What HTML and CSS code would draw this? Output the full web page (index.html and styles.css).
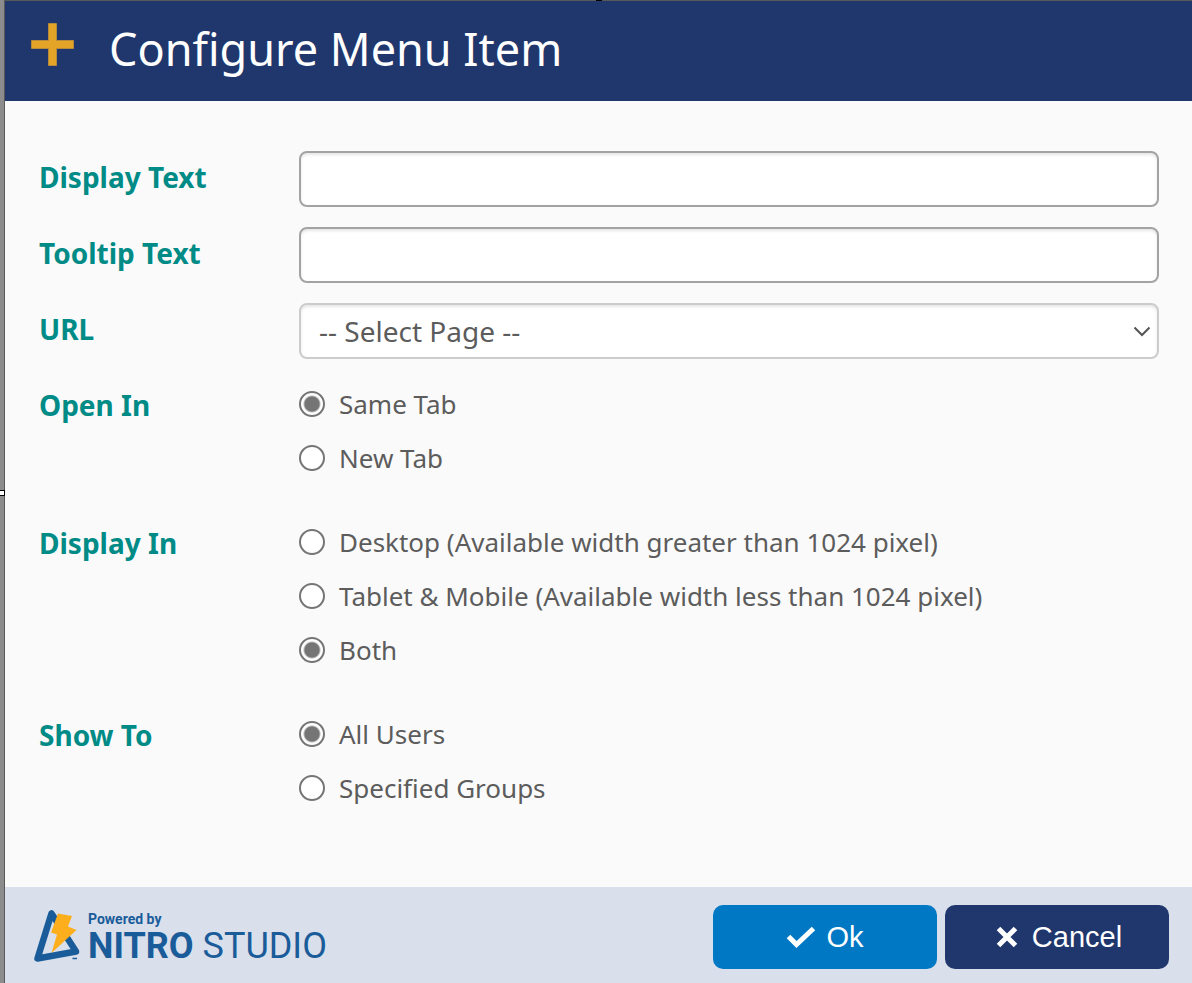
FILE: index.html
```html
<!DOCTYPE html>
<html lang="en">
<head>
    <meta charset="UTF-8">
    <meta name="viewport" content="width=device-width, initial-scale=1.0">
    <title>Configure Menu Item</title>
    <link rel="stylesheet" href="styles.css">
</head>
<body>
    <span class="handle handle-top"></span>
    <span class="handle handle-left"></span>

    <form class="dialog">
        <header class="dialog-header">
            <svg class="plus-icon" width="43" height="43" viewBox="0 0 43 43" aria-hidden="true">
                <path d="M17.5 .5h8v17h17v8h-17v17h-8v-17h-17v-8h17z" fill="#e3a427" stroke="#b78a3a"/>
            </svg>
            <h1>Configure Menu Item</h1>
        </header>

        <main class="dialog-body">
            <label class="field-label" for="display-text">Display Text</label>
            <input class="text-box" type="text" id="display-text">

            <label class="field-label" for="tooltip-text">Tooltip Text</label>
            <input class="text-box" type="text" id="tooltip-text">

            <label class="field-label" for="url">URL</label>
            <div class="select-wrap">
                <select id="url">
                    <option>-- Select Page --</option>
                </select>
                <svg class="chevron" width="18" height="12" viewBox="0 0 18 12" aria-hidden="true">
                    <path d="M1.5 1.5L9 9l7.500-7.500" fill="none" stroke="#555" stroke-width="2"/>
                </svg>
            </div>

            <span class="field-label" id="open-in">Open In</span>
            <div class="options" role="radiogroup" aria-labelledby="open-in">
                <label><input type="radio" name="open" checked>Same Tab</label>
                <label><input type="radio" name="open">New Tab</label>
            </div>

            <span class="field-label" id="display-in">Display In</span>
            <div class="options" role="radiogroup" aria-labelledby="display-in">
                <label><input type="radio" name="display">Desktop (Available width greater than 1024 pixel)</label>
                <label><input type="radio" name="display">Tablet &amp; Mobile (Available width less than 1024 pixel)</label>
                <label><input type="radio" name="display" checked>Both</label>
            </div>

            <span class="field-label" id="show-to">Show To</span>
            <div class="options" role="radiogroup" aria-labelledby="show-to">
                <label><input type="radio" name="show" checked>All Users</label>
                <label><input type="radio" name="show">Specified Groups</label>
            </div>
        </main>

        <footer class="dialog-footer">
            <div class="brand">
                <svg width="47" height="54" viewBox="0 0 47 54" aria-hidden="true">
                    <path d="M18.500 4.500L4.500 49.500l38.500-7z" fill="none" stroke="#1a5c9a" stroke-width="6.500" stroke-linejoin="round"/>
                    <path d="M25 4.500l14 2.500-4 10.500 8.500 3.500L18.500 44l5.500-18.500-6-2z" fill="#fcae1d"/>
                    <path d="M39.500 49.500h4.500" stroke="#1a5c9a" stroke-width="1.500"/>
                </svg>
                <div class="brand-text">
                    <span class="powered">Powered by</span>
                    <span class="brand-name"><b>NITRO</b> STUDIO</span>
                </div>
            </div>
            <div class="buttons">
                <button type="button" class="btn btn-ok">
                    <svg width="30" height="22" viewBox="0 0 30 22" aria-hidden="true">
                        <path d="M2.500 10.500l8 8L27.500 2.500" fill="none" stroke="#fff" stroke-width="5"/>
                    </svg>
                    Ok
                </button>
                <button type="button" class="btn btn-cancel">
                    <svg width="22" height="22" viewBox="0 0 22 22" aria-hidden="true">
                        <path d="M2.500 2.500l17 17M19.500 2.500l-17 17" fill="none" stroke="#fff" stroke-width="5"/>
                    </svg>
                    Cancel
                </button>
            </div>
        </footer>
    </form>
</body>
</html>
```
FILE: styles.css
```css
* {
    box-sizing: border-box;
}

body {
    margin: 0;
    padding-left: 4px;
    position: relative;
    background-color: #8c8c8c;
    color: #5c5c5c;
    font-family: "Segoe UI", "Noto Sans", sans-serif;
    font-size: 28px;
}

.dialog {
    display: flex;
    flex-direction: column;
    min-height: 100vh;
    border-top: 1px solid #595959;
    border-left: 1px solid #595959;
    background-color: #fafafa;
}

/* resize handles */
.handle {
    position: absolute;
    background-color: #fff;
    border: 1px solid #000;
}

.handle-top {
    top: -4px;
    left: 50%;
    width: 6px;
    height: 5px;
}

.handle-left {
    top: 50%;
    left: -1px;
    width: 6px;
    height: 6px;
    margin-top: -2px;
}

.dialog-header {
    display: flex;
    align-items: flex-start;
    gap: 35px;
    height: 100px;
    padding: 0 26px;
    background-color: #20376d;
    color: #fff;
}

.plus-icon {
    margin-top: 22px;
}

.dialog-header h1 {
    margin: 0;
    font-size: 45px;
    font-weight: normal;
    line-height: 96px;
}

.dialog-body {
    flex: 1;
    display: grid;
    grid-template-columns: 260px 1fr;
    align-content: start;
    row-gap: 20px;
    padding: 50px 33px 50px 34px;
}

.field-label {
    color: #008b87;
    font-weight: bold;
    line-height: 52px;
}

.text-box,
.select-wrap select {
    width: 100%;
    height: 56px;
    padding: 0 18px;
    border: 2px solid #a3a3a3;
    border-radius: 8px;
    background-color: #fff;
    box-shadow: inset 0 2px 3px rgba(0, 0, 0, 0.1);
    color: inherit;
    font: inherit;
}

.select-wrap {
    position: relative;
}

.select-wrap select {
    display: block;
    appearance: none;
    border-color: #ccc;
}

.chevron {
    position: absolute;
    top: 23px;
    right: 8px;
    pointer-events: none;
}

.options {
    display: flex;
    flex-direction: column;
    gap: 4px;
    margin-bottom: 14px;
    font-size: 26px;
}

.options label {
    display: flex;
    align-items: center;
    gap: 14px;
    line-height: 50px;
}

.options input {
    appearance: none;
    flex: none;
    width: 26px;
    height: 26px;
    margin: 0;
    border: 2px solid #757575;
    border-radius: 50%;
    background-color: #fff;
}

.options input:checked {
    background: radial-gradient(circle, #757575 7px, #fff 9px);
}

.dialog-footer {
    display: flex;
    align-items: flex-start;
    justify-content: space-between;
    padding: 18px 23px 14px 28px;
    background-color: #d9dfeb;
}

.brand {
    display: flex;
    gap: 8px;
    padding-top: 4px;
    color: #1a5c9a;
    font-family: Roboto, sans-serif;
}

.brand-text {
    display: flex;
    flex-direction: column;
}

.powered {
    font-size: 14px;
    font-weight: bold;
    line-height: 20px;
}

.brand-name {
    font-size: 36px;
    line-height: 34px;
    white-space: nowrap;
}

.buttons {
    display: flex;
    gap: 8px;
}

.btn {
    display: flex;
    align-items: center;
    justify-content: center;
    gap: 10px;
    width: 224px;
    height: 64px;
    border: none;
    border-radius: 10px;
    color: #fff;
    font-family: Arial, "Liberation Sans", sans-serif;
    font-size: 29px;
    cursor: pointer;
}

.btn-ok {
    background-color: #0078c4;
}

.btn-cancel {
    gap: 14px;
    padding: 0 6px 0 10px;
    background-color: #20376d;
}
```
